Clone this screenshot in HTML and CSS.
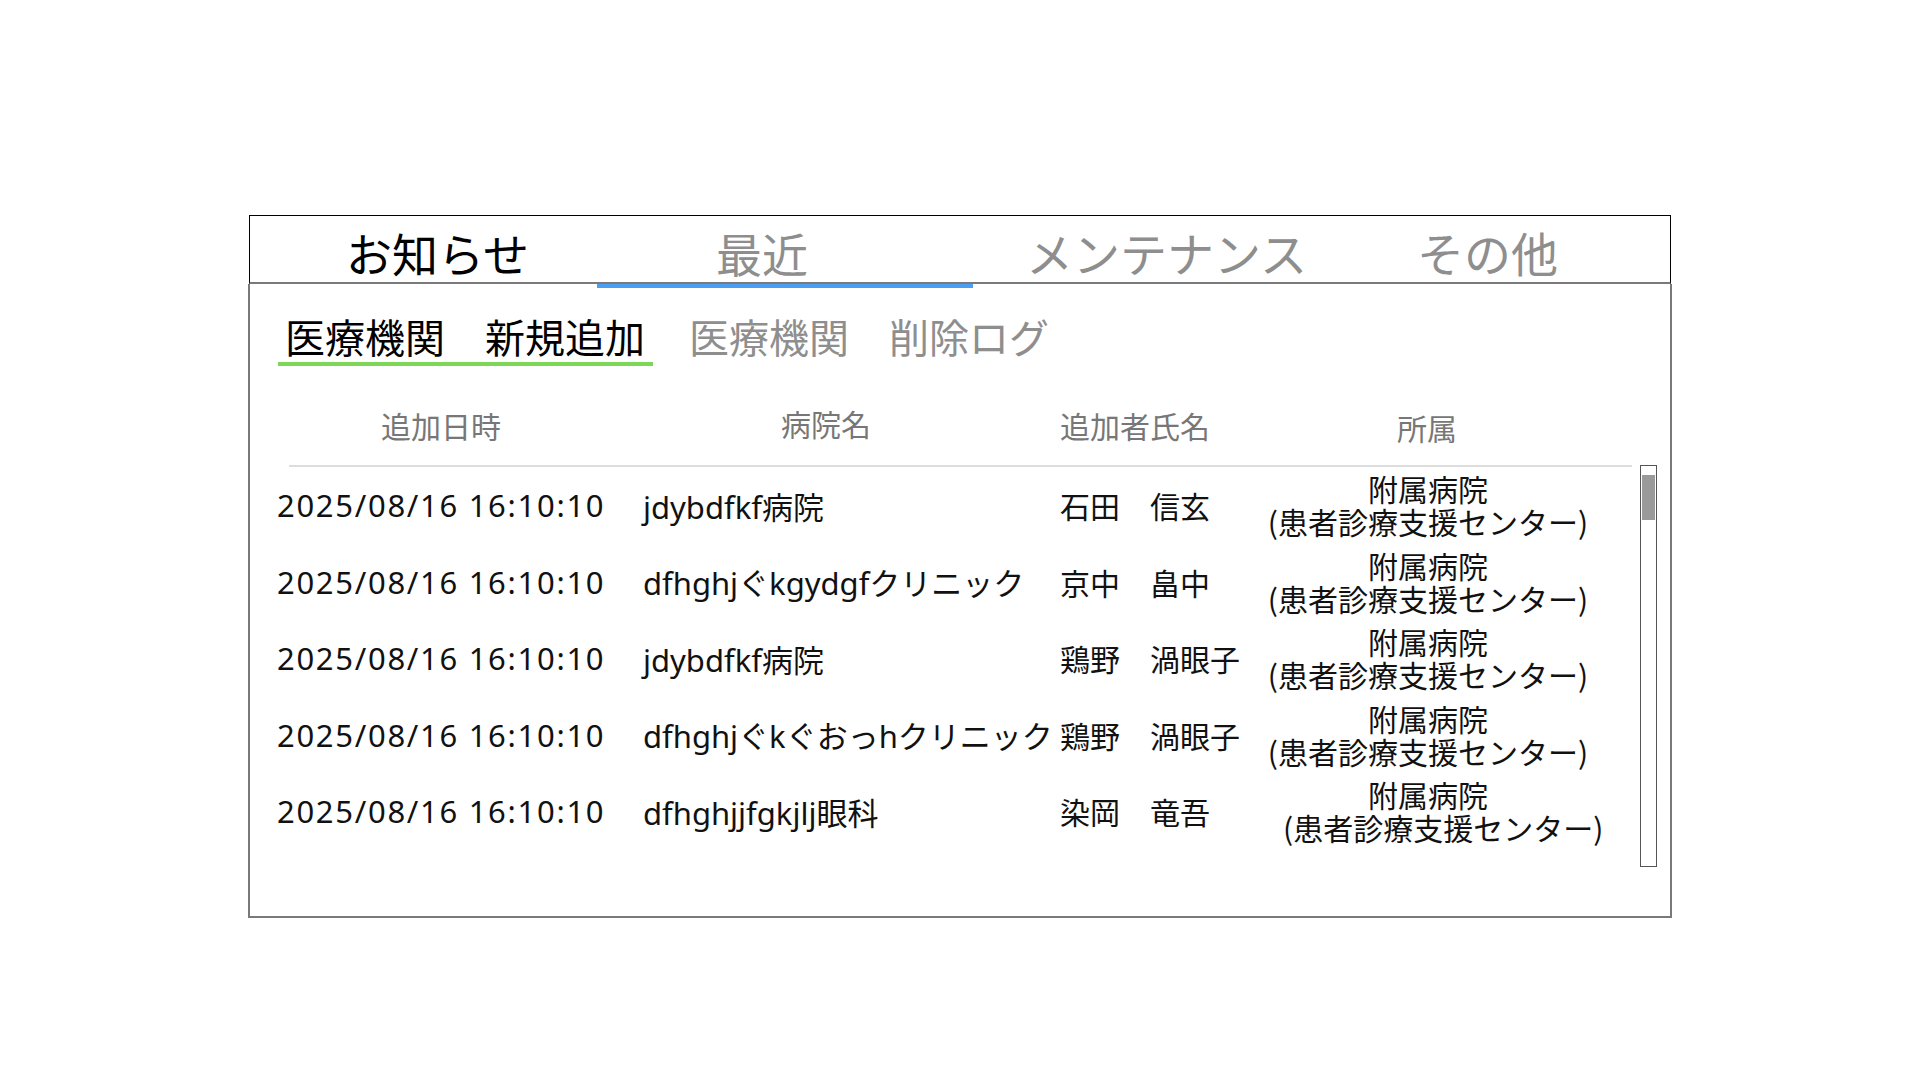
FILE: index.html
```html
<!DOCTYPE html>
<html lang="ja">
<head>
<meta charset="utf-8">
<title>お知らせ</title>
<link rel="stylesheet" href="styles.css">
</head>
<body>
<div class="page">
  <div class="panel">
    <nav class="tabs">
      <div class="tab tab-1 is-current">お知らせ</div>
      <div class="tab tab-2 is-selected">最近</div>
      <div class="tab tab-3">メンテナンス</div>
      <div class="tab tab-4">その他</div>
    </nav>
    <div class="content">
      <div class="subtabs">
        <div class="subtab is-active">医療機関　新規追加</div>
        <div class="subtab">医療機関　削除ログ</div>
      </div>
      <div class="thead">
        <div class="th th-date">追加日時</div>
        <div class="th th-hospital">病院名</div>
        <div class="th th-name">追加者氏名</div>
        <div class="th th-affil">所属</div>
      </div>
      <div class="tbody">
        <div class="rows">
          <div class="row">
            <div class="cell-date">2025/08/16 16:10:10</div>
            <div class="cell-hospital">jdybdfkf病院</div>
            <div class="cell-name">石田　信玄</div>
            <div class="cell-affil"><div>附属病院</div><div>(患者診療支援センター)</div></div>
          </div>
          <div class="row">
            <div class="cell-date">2025/08/16 16:10:10</div>
            <div class="cell-hospital">dfhghjぐkgydgfクリニック</div>
            <div class="cell-name">京中　畠中</div>
            <div class="cell-affil"><div>附属病院</div><div>(患者診療支援センター)</div></div>
          </div>
          <div class="row">
            <div class="cell-date">2025/08/16 16:10:10</div>
            <div class="cell-hospital">jdybdfkf病院</div>
            <div class="cell-name">鶏野　渦眼子</div>
            <div class="cell-affil"><div>附属病院</div><div>(患者診療支援センター)</div></div>
          </div>
          <div class="row">
            <div class="cell-date">2025/08/16 16:10:10</div>
            <div class="cell-hospital">dfhghjぐkぐおっhクリニック</div>
            <div class="cell-name">鶏野　渦眼子</div>
            <div class="cell-affil"><div>附属病院</div><div>(患者診療支援センター)</div></div>
          </div>
          <div class="row">
            <div class="cell-date">2025/08/16 16:10:10</div>
            <div class="cell-hospital">dfhghjjfgkjlj眼科</div>
            <div class="cell-name">染岡　竜吾</div>
            <div class="cell-affil"><div>附属病院</div><div class="affil-shift">(患者診療支援センター)</div></div>
          </div>
        </div>
        <div class="scrollbar"><div class="thumb"></div></div>
      </div>
    </div>
  </div>
</div>
</body>
</html>
```

FILE: styles.css
```css
html, body {
  margin: 0;
  padding: 0;
  background: #ffffff;
}

body {
  font-family: "Noto Sans CJK JP", sans-serif;
  color: #111111;
}

.page {
  padding: 215px 0 0 248px;
}

.panel {
  width: 1424px;
}

/* top tabs */
.tabs {
  display: flex;
  box-sizing: border-box;
  height: 69px;
  margin: 0 1px;
  border: 1px solid #000000;
  border-bottom: 2px solid #7a7a7a;
}

.tab {
  position: relative;
  box-sizing: border-box;
  height: 66px;
  font-size: 46px;
  line-height: 72px;
  color: #8e8e8e;
  white-space: nowrap;
}

.tab.is-current {
  color: #000000;
}

.tab-1 {
  width: 347px;
  padding-left: 96px;
}

.tab-2 {
  width: 376px;
  padding-left: 119px;
}

.tab-3 {
  width: 407px;
  padding-left: 53px;
  font-size: 47px;
}

.tab-4 {
  padding-left: 37px;
  font-size: 47px;
}

.tab.is-selected::after {
  content: "";
  position: absolute;
  left: 0;
  right: 0;
  top: 68px;
  height: 4px;
  background: #4a9ef3;
}

/* content */
.content {
  box-sizing: border-box;
  height: 634px;
  border: 2px solid #7a7a7a;
  border-top: 0;
}

.subtabs {
  display: flex;
  padding: 26px 0 0 28px;
}

.subtab {
  font-size: 40px;
  line-height: 52px;
  padding: 0 8px 0 7px;
  margin-right: 29px;
  color: #8e8e8e;
  border-bottom: 4px solid transparent;
  white-space: nowrap;
}

.subtab.is-active {
  color: #000000;
  border-bottom-color: #7dd756;
}

/* table header */
.thead {
  display: grid;
  grid-template-columns: 354px 417px 195px 1fr;
  width: 1343px;
  margin-left: 39px;
  padding: 39px 0 20px;
  border-bottom: 2px solid #dddddd;
  font-size: 30px;
  line-height: 40px;
  color: #777777;
}

.th {
  white-space: nowrap;
}

.th-date {
  padding-left: 92px;
}

.th-hospital {
  padding-left: 138px;
  position: relative;
  top: -2px;
}

.th-affil {
  padding-left: 142px;
  position: relative;
  top: 2px;
}

/* table body */
.tbody {
  display: flex;
  margin-left: 27px;
  height: 400px;
}

.rows {
  width: 1363px;
}

.row {
  display: grid;
  grid-template-columns: 366px 417px 195px 346px;
  align-items: center;
  height: 76.5px;
  font-size: 30px;
  color: #111111;
}

.cell-date,
.cell-hospital {
  font-family: "Noto Sans", "Noto Sans CJK JP", sans-serif;
  font-size: 31px;
  white-space: nowrap;
}

.cell-date {
  letter-spacing: 1.7px;
}

.cell-name {
  white-space: nowrap;
}

.cell-affil {
  text-align: center;
  line-height: 33px;
  white-space: nowrap;
}

.affil-shift {
  padding-left: 28px;
}

.scrollbar {
  box-sizing: border-box;
  width: 17px;
  height: 402px;
  margin-top: -2px;
  border: 1px solid #555555;
  background: #ffffff;
}

.thumb {
  height: 45px;
  margin: 9px 1px 0 1px;
  background: #9a9a9a;
}
```
